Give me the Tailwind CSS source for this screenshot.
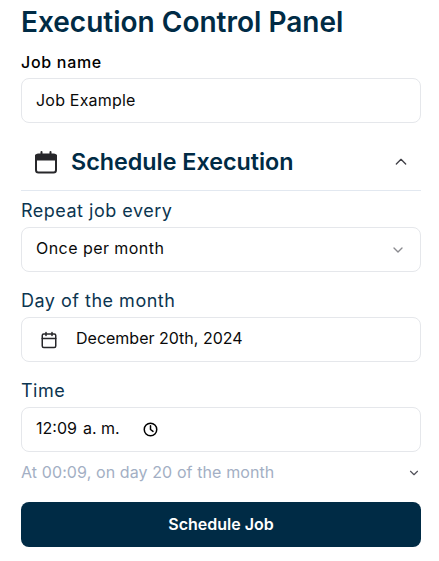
<!DOCTYPE html>
<html lang="en">
<head>
  <meta charset="UTF-8" />
  <meta name="viewport" content="width=device-width, initial-scale=1.0"/>
  <title>Execution Control Panel</title>
  <script src="https://cdn.jsdelivr.net/npm/@tailwindcss/browser@4"></script>
</head>
<body class="bg-white font-['Inter',sans-serif] text-[#002b45]">
  <div class="w-[439px] h-[561px] overflow-hidden pl-[21px] pr-[18px] flex flex-col">
    <h1 class="h-[44px] flex items-center text-[28px] font-semibold leading-none whitespace-nowrap">Execution Control Panel</h1>

    <!-- Job name -->
    <label class="mt-[8px] h-[20px] flex items-center text-[16px] tracking-[0.7px] font-medium text-black">Job name</label>
    <div class="mt-[6px] h-[45px] flex items-center px-[14px] border border-[#e5e7eb] rounded-[8px] text-[16px] tracking-[0.2px] text-[#0a0a0a]">
      <span class="mb-[2px]">Job Example</span>
    </div>

    <!-- Schedule header -->
    <div class="mt-[17px] h-[51px] pb-[6px] flex items-center border-b border-[#e2e8f0] pl-[13px] pr-[12px]">
      <svg class="w-[24px] h-[24px] text-[#27272a]" viewBox="0 0 24 24" fill="none" stroke="currentColor" stroke-width="2" stroke-linecap="round" stroke-linejoin="round">
        <rect x="2" y="4.5" width="20" height="18" rx="2.5"/>
        <path d="M2 5.5h20v4H2z" fill="currentColor"/>
        <path d="M7.5 2v3M16.5 2v3"/>
      </svg>
      <h2 class="ml-[13px] text-[23.3px] font-semibold leading-none whitespace-nowrap">Schedule Execution</h2>
      <svg class="ml-auto w-[16px] h-[16px] text-[#3f3f46]" viewBox="0 0 24 24" fill="none" stroke="currentColor" stroke-width="2" stroke-linecap="round" stroke-linejoin="round">
        <path d="m5 15 7-7 7 7"/>
      </svg>
    </div>

    <!-- Repeat -->
    <label class="mt-[9px] h-[20px] flex items-center text-[18px] tracking-[0.5px] text-[#0c3550]">Repeat job every</label>
    <div class="mt-[7px] h-[45px] flex items-center justify-between px-[14px] border border-[#e5e7eb] rounded-[8px] text-[16px] tracking-[0.45px] text-[#0a0a0a]">
      <span class="mb-[3px]">Once per month</span>
      <svg class="w-[16px] h-[16px] text-[#8a8a8f]" viewBox="0 0 24 24" fill="none" stroke="currentColor" stroke-width="2" stroke-linecap="round" stroke-linejoin="round">
        <path d="m6 9 6 6 6-6"/>
      </svg>
    </div>

    <!-- Day -->
    <label class="mt-[18px] h-[20px] flex items-center text-[18px] tracking-[0.5px] text-[#0c3550]">Day of the month</label>
    <div class="mt-[7px] h-[45px] flex items-center px-[18px] border border-[#e5e7eb] rounded-[8px] text-[16px] text-[#0a0a0a]">
      <svg class="w-[18px] h-[18px] text-[#27272a]" viewBox="0 0 24 24" fill="none" stroke="currentColor" stroke-width="2" stroke-linecap="round" stroke-linejoin="round">
        <rect x="3" y="4" width="18" height="18" rx="2"/>
        <path d="M8 2v4M16 2v4M3 10h18"/>
      </svg>
      <span class="ml-[18px] mb-[3px]">December 20th, 2024</span>
    </div>

    <!-- Time -->
    <label class="mt-[18px] h-[20px] flex items-center text-[18px] tracking-[0.5px] text-[#0c3550]">Time</label>
    <div class="mt-[7px] h-[45px] flex items-center px-[14px] border border-[#e5e7eb] rounded-[8px] text-[16px] text-[#0a0a0a]">
      <span class="mb-[3px]">12:09</span>
      <span class="ml-[6px] mb-[3px]">a. m.</span>
      <svg class="ml-[23px] w-[15px] h-[15px] text-black" viewBox="0 0 24 24" fill="none" stroke="currentColor" stroke-width="2.4" stroke-linecap="round" stroke-linejoin="round">
        <circle cx="12" cy="12" r="10"/>
        <path d="M12 6v6l4 3"/>
      </svg>
    </div>

    <!-- Summary -->
    <div class="mt-[11px] h-[20px] flex items-center justify-between text-[16px] tracking-[0.1px] text-[#a3afc4]">
      <span class="mb-[2px]">At 00:09, on day 20 of the month</span>
      <svg class="w-[14px] h-[14px] text-[#52525b]" viewBox="0 0 24 24" fill="none" stroke="currentColor" stroke-width="2" stroke-linecap="round" stroke-linejoin="round">
        <path d="m6 9 6 6 6-6"/>
      </svg>
    </div>

    <button class="mt-[19px] h-[45px] pb-[2px] bg-[#002b45] text-white rounded-[8px] text-[16px] font-semibold">Schedule Job</button>
  </div>
</body>
</html>
